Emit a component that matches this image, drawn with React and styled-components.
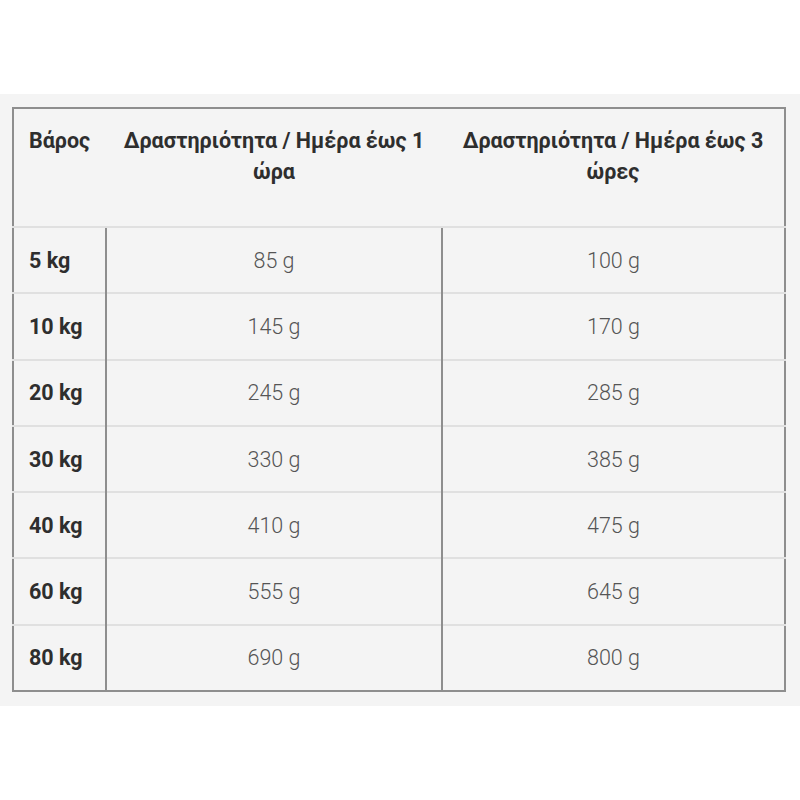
import styled, { createGlobalStyle } from "styled-components"

const GlobalStyle = createGlobalStyle`
  body {
    margin: 0;
    background: #ffffff;
    font-family: Roboto, "Noto Sans", "Liberation Sans", sans-serif;
  }
`

export const Section = styled.section`
  margin-top: 94px;
  background-color: #f4f4f4;
  padding: 13px 14px 14px 12px;
`

export const Table = styled.table`
  width: 774px;
  table-layout: fixed;
  border-collapse: collapse;
  border: 2px solid #8e8e8e;
`

export const HeadCell = styled.th`
  padding: 16px 15px 0;
  height: 101px;
  vertical-align: top;
  text-align: ${(p) => (p.$left ? "left" : "center")};
  font-size: 21.5px;
  font-weight: 700;
  line-height: 31px;
  color: #2e2e2e;
  border-bottom: 2px solid #e0e0e0;
`

export const Row = styled.tr`
  height: 66.3px;
  & + & td,
  & + & th {
    border-top: 2px solid #e0e0e0;
  }
`

export const WeightCell = styled.th`
  padding: 0 15px;
  text-align: left;
  font-size: 21.5px;
  font-weight: 700;
  color: #2e2e2e;
`

export const ValueCell = styled.td`
  padding: 0 15px;
  text-align: center;
  font-size: 21.5px;
  font-weight: 300;
  color: #555555;
  border-left: 2px solid #8e8e8e;
`

const rows = [
  ["5 kg", "85 g", "100 g"],
  ["10 kg", "145 g", "170 g"],
  ["20 kg", "245 g", "285 g"],
  ["30 kg", "330 g", "385 g"],
  ["40 kg", "410 g", "475 g"],
  ["60 kg", "555 g", "645 g"],
  ["80 kg", "690 g", "800 g"],
]

const App = () => {
  return (
    <>
      <GlobalStyle />
      <Section>
        <Table>
          <colgroup>
            <col style={{ width: "93px" }} />
            <col style={{ width: "336px" }} />
            <col />
          </colgroup>
          <thead>
            <tr>
              <HeadCell $left>Βάρος</HeadCell>
              <HeadCell>Δραστηριότητα / Ημέρα έως 1 ώρα</HeadCell>
              <HeadCell>Δραστηριότητα / Ημέρα έως 3 ώρες</HeadCell>
            </tr>
          </thead>
          <tbody>
            {rows.map((r) => (
              <Row key={r[0]}>
                <WeightCell>{r[0]}</WeightCell>
                <ValueCell>{r[1]}</ValueCell>
                <ValueCell>{r[2]}</ValueCell>
              </Row>
            ))}
          </tbody>
        </Table>
      </Section>
    </>
  )
}

export default App
